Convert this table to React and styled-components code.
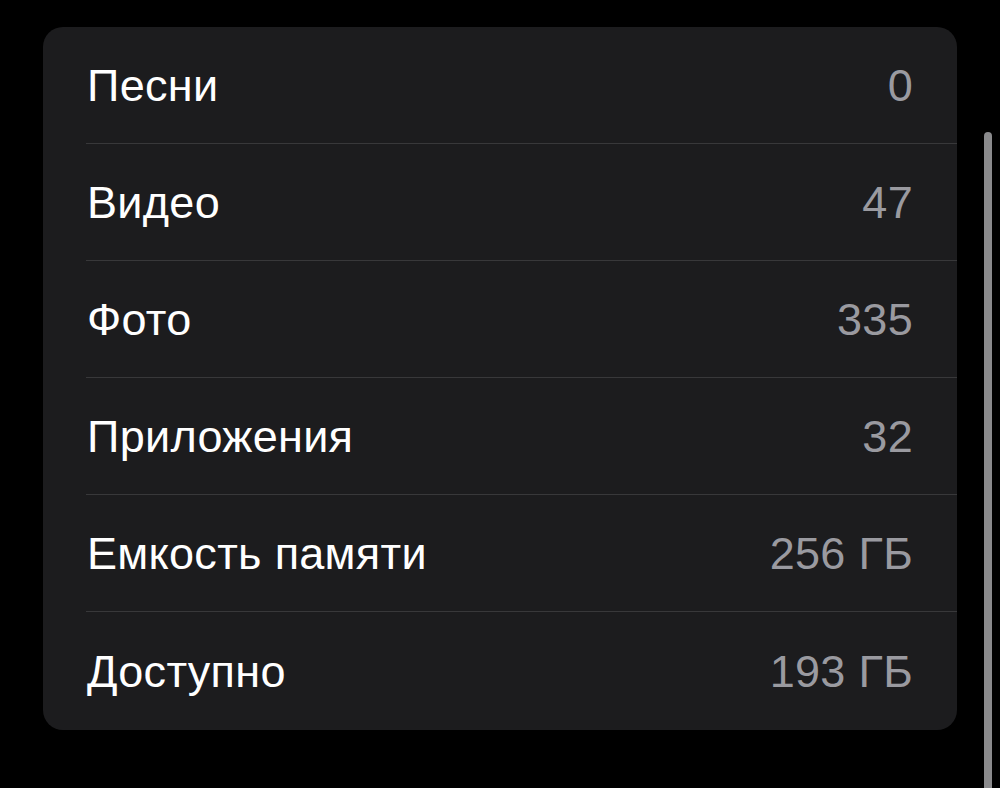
import styled, { createGlobalStyle } from "styled-components";

const GlobalStyle = createGlobalStyle`
  html, body {
    margin: 0;
    padding: 0;
    background: #000;
  }
  body {
    font-family: "Liberation Sans", Arial, sans-serif;
    -webkit-font-smoothing: antialiased;
  }
`;

const Page = styled.div`
  position: relative;
  height: 788px;
  width: 1000px;
  overflow: hidden;
  background: #000;
  padding: 27px 0 0 43px;
  box-sizing: border-box;
`;

const Card = styled.div`
  width: 914px;
  background: #1c1c1e;
  border-radius: 20px;
  overflow: hidden;
`;

const Row = styled.div`
  padding-left: 43px;
`;

const RowInner = styled.div`
  height: ${(p) => (p.$last ? "118px" : "117px")};
  display: flex;
  align-items: center;
  justify-content: space-between;
  padding: 2px 44px 0 1px;
  box-sizing: border-box;
  border-bottom: ${(p) => (p.$last ? "none" : "1px solid #38383a")};
`;

const Label = styled.span`
  color: #fff;
  font-size: 45px;
  letter-spacing: 0.3px;
`;

const Value = styled.span`
  color: #9a9aa0;
  font-size: 45px;
  letter-spacing: 0.3px;
`;

const ScrollThumb = styled.div`
  position: absolute;
  left: 984px;
  top: 132px;
  width: 8px;
  height: 680px;
  border-radius: 4px;
  background: #8a8a8c;
`;

const items = [
  ["Песни", "0"],
  ["Видео", "47"],
  ["Фото", "335"],
  ["Приложения", "32"],
  ["Емкость памяти", "256 ГБ"],
  ["Доступно", "193 ГБ"],
];

export default function App() {
  return (
    <>
      <GlobalStyle />
      <Page>
        <Card>
          {items.map(([label, value], i) => (
            <Row key={label}>
              <RowInner $last={i === items.length - 1}>
                <Label>{label}</Label>
                <Value>{value}</Value>
              </RowInner>
            </Row>
          ))}
        </Card>
        <ScrollThumb />
      </Page>
    </>
  );
}
